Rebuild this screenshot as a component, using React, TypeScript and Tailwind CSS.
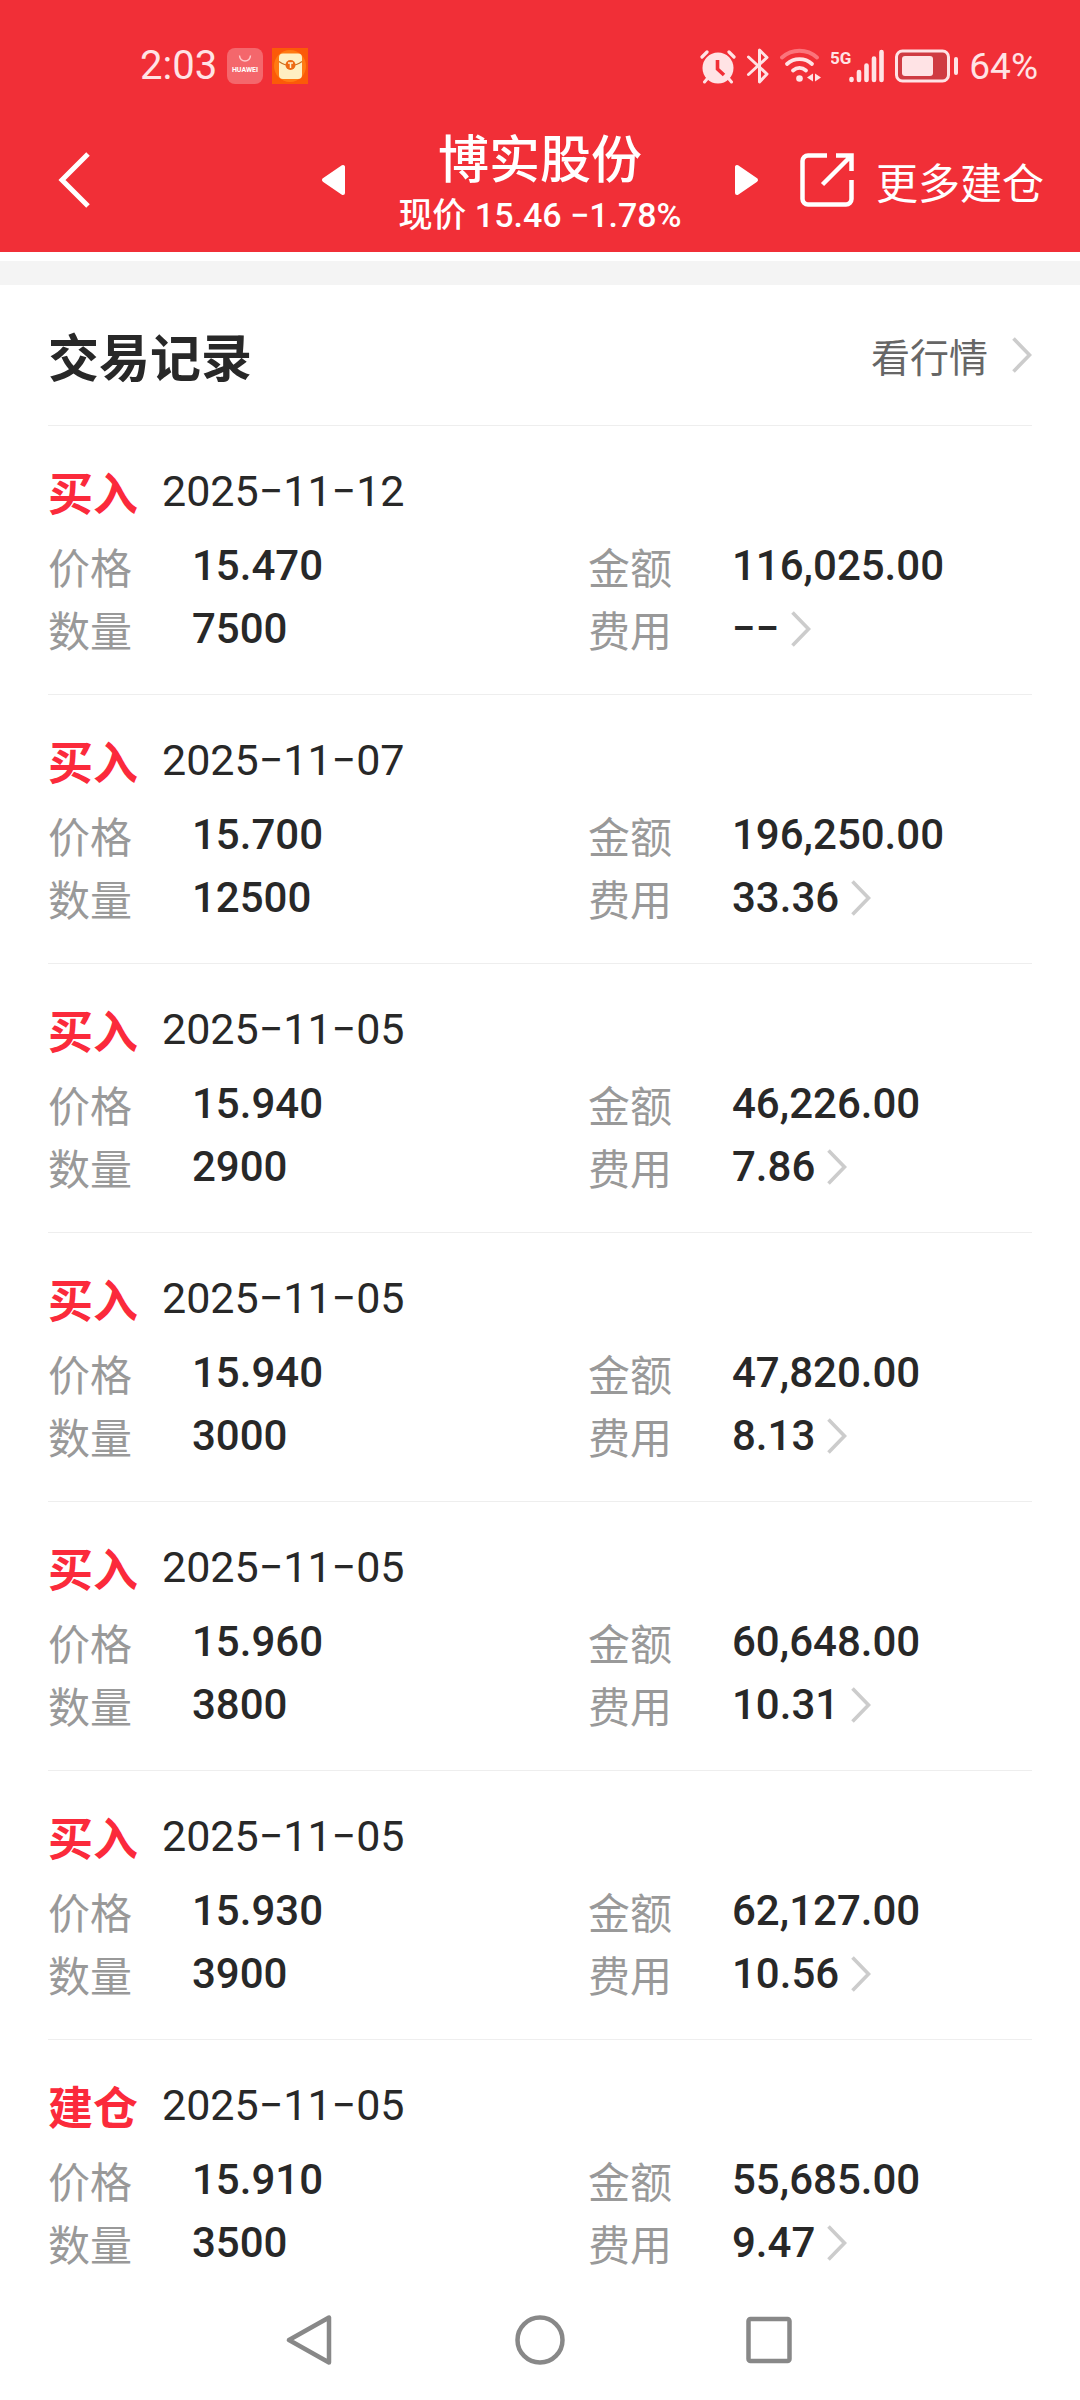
import React from 'react';

const RECORDS = [
  { type: '买入', date: '2025−11−12', price: '15.470', count: '7500', amount: '116,025.00', fee: '−−' },
  { type: '买入', date: '2025−11−07', price: '15.700', count: '12500', amount: '196,250.00', fee: '33.36' },
  { type: '买入', date: '2025−11−05', price: '15.940', count: '2900', amount: '46,226.00', fee: '7.86' },
  { type: '买入', date: '2025−11−05', price: '15.940', count: '3000', amount: '47,820.00', fee: '8.13' },
  { type: '买入', date: '2025−11−05', price: '15.960', count: '3800', amount: '60,648.00', fee: '10.31' },
  { type: '买入', date: '2025−11−05', price: '15.930', count: '3900', amount: '62,127.00', fee: '10.56' },
  { type: '建仓', date: '2025−11−05', price: '15.910', count: '3500', amount: '55,685.00', fee: '9.47' },
];

const Chevron: React.FC = () => (
  <svg className="h-9 w-5 shrink-0" viewBox="0 0 20 36" fill="none" stroke="#cccccc" strokeWidth="3.6" aria-hidden="true">
    <path d="M1.5 1.5 17.5 18 1.5 34.5" />
  </svg>
);

const StatusBar: React.FC = () => (
  <div className="flex h-[108px] items-center justify-between pt-6 pr-[42px] pl-[140px] font-[Roboto,sans-serif] text-[#ffe3e5]">
    <div className="flex items-center gap-[9px]">
      <span className="w-[78px] text-[40px] leading-none">2:03</span>
      <svg className="size-9" viewBox="0 0 36 36" aria-hidden="true">
        <rect width="36" height="36" rx="8" fill="#f4676c" />
        <path d="M12.5 7.5a5.5 5.5 0 0 0 11 0" fill="none" stroke="#ffc9cb" strokeWidth="1.4" />
        <text x="18" y="24" textAnchor="middle" fontSize="7" fontWeight="700" fill="#fff">HUAWEI</text>
      </svg>
      <svg className="size-9" viewBox="0 0 36 36" aria-hidden="true">
        <rect width="36" height="36" fill="#fb5a08" />
        <circle cx="18" cy="18" r="16" fill="#ff7a12" />
        <rect x="7" y="5.5" width="23" height="25.5" rx="4" fill="#ffefc2" />
        <path d="M7 13.5c4 3 7 4 11.5 4s7.5-1 11.5-4" fill="none" stroke="#c9701f" strokeWidth="1.3" />
        <circle cx="18.5" cy="17" r="5" fill="#ee6a12" />
        <path d="M16 15h5M18.5 15v5" stroke="#fff0cc" strokeWidth="1.5" />
      </svg>
    </div>
    <div className="flex items-center gap-2.5">
      <svg className="size-9" viewBox="0 0 36 36" fill="none" stroke="currentColor" strokeLinecap="round" aria-hidden="true">
        <circle cx="18" cy="20" r="15.5" fill="currentColor" stroke="none" />
        <path d="M2 9 7 4M34 9 29 4" strokeWidth="3.2" />
        <path d="M7 31 4.5 34M29 31 31.5 34" strokeWidth="3" />
        <path d="M17.5 12v9l6.5 6" stroke="#f12f37" strokeWidth="3.6" strokeLinecap="butt" />
      </svg>
      <svg className="h-9 w-6" viewBox="0 0 24 36" fill="none" stroke="currentColor" strokeWidth="3" strokeLinecap="round" strokeLinejoin="round" aria-hidden="true">
        <path d="M2.5 9 21 26 13.5 34V2L21 9.5 2.5 26.5" />
      </svg>
      <svg className="h-9 w-[41px]" viewBox="0 0 41 36" fill="none" stroke="currentColor" strokeWidth="3.8" strokeLinecap="round" aria-hidden="true">
        <path d="M2 9.5C12 .5 27 .5 37 9.5" stroke="#fb747b" />
        <path d="M7 16c7-6.5 18-6.5 25 0M13 22.5c4-3.5 9-3.5 13 0" />
        <circle cx="19.5" cy="30.5" r="3.3" fill="currentColor" stroke="none" />
        <path d="M33 25.5v8l-6-4zM35 25.5v8l6-4z" fill="currentColor" stroke="none" />
      </svg>
      <svg className="h-9 w-[53px]" viewBox="0 0 53 36" fill="none" stroke="currentColor" strokeWidth="4.6" strokeLinecap="round" aria-hidden="true">
        <text x="-1" y="16" fontSize="17" fontWeight="700" fill="currentColor" stroke="none">5G</text>
        <path d="M20.5 31v1M28 24v8M35.5 17.5V32M43 10.5V32M50.5 4V32" />
      </svg>
      <svg className="h-9 w-[65px]" viewBox="0 0 65 36" aria-hidden="true">
        <rect x="2.5" y="3" width="52" height="30" rx="6" fill="#cf3b42" stroke="currentColor" strokeWidth="3" />
        <rect x="8" y="8" width="31" height="20" rx="3" fill="currentColor" />
        <rect x="60" y="9" width="4" height="18" rx="2" fill="currentColor" />
      </svg>
      <span className="text-[37px] leading-none">64%</span>
    </div>
  </div>
);

const TitleBar: React.FC = () => (
  <div className="grid h-36 grid-cols-[1fr_438px_1fr] items-center text-white">
    <button type="button" aria-label="返回" className="justify-self-start pl-[58px]">
      <svg className="h-14 w-8" viewBox="0 0 32 56" fill="none" stroke="currentColor" strokeWidth="5" aria-hidden="true">
        <path d="M30 2 4 28 30 54" />
      </svg>
    </button>
    <div className="flex items-center justify-between">
      <button type="button" aria-label="上一只">
        <svg className="h-8 w-6" viewBox="0 0 24 32" fill="currentColor" stroke="currentColor" strokeWidth="4" strokeLinejoin="round" aria-hidden="true">
          <path d="M22 3v26L3 16z" />
        </svg>
      </button>
      <div className="pt-3.5 text-center font-medium">
        <h1 className="text-[51px] leading-[56px]">博实股份</h1>
        <p className="font-[Roboto,'Noto_Sans_CJK_SC',sans-serif] text-[34px] leading-[62px] whitespace-nowrap">
          现价 15.46 −1.78%
        </p>
      </div>
      <button type="button" aria-label="下一只">
        <svg className="h-8 w-6" viewBox="0 0 24 32" fill="currentColor" stroke="currentColor" strokeWidth="4" strokeLinejoin="round" aria-hidden="true">
          <path d="M2 3v26l19-13z" />
        </svg>
      </button>
    </div>
    <button type="button" className="flex items-center gap-[22px] justify-self-end pr-9 text-[42px] whitespace-nowrap">
      <svg className="size-[54px]" viewBox="0 0 54 54" fill="none" stroke="currentColor" strokeWidth="4.5" aria-hidden="true">
        <path d="M27 2.5H8A5.5 5.5 0 0 0 2.5 8v38A5.5 5.5 0 0 0 8 51.5h38a5.5 5.5 0 0 0 5.5-5.5V27" />
        <path d="M36 2.5h15.500V18M51 3 22.5 31.5" />
      </svg>
      更多建仓
    </button>
  </div>
);

const Field: React.FC<{ label: string; children: React.ReactNode }> = ({ label, children }) => (
  <div className="flex h-[63px] pl-12 leading-[63px]">
    <dt className="w-36 text-[42px] text-[#999999]">{label}</dt>
    <dd className="font-[Roboto,sans-serif] text-[42px] font-medium">{children}</dd>
  </div>
);

export default function App() {
  return (
    <div className="flex min-h-screen flex-col bg-white font-['Noto_Sans_CJK_SC',sans-serif] text-[#282828]">
      <header className="bg-[#f12f37]">
        <StatusBar />
        <TitleBar />
      </header>
      <div className="mt-[9px] h-6 bg-[#f4f4f4]" />

      <main>
        <div className="flex h-[140px] items-center justify-between px-12">
          <h2 className="text-[51px] font-bold">交易记录</h2>
          <a href="#quote" className="flex items-center gap-6 text-[39px] text-[#666666]">
            看行情
            <Chevron />
          </a>
        </div>
        <ul>
          {RECORDS.map((item, i) => (
            <li key={i} className="pb-[34px] last:pb-0">
              <div className="mx-12 border-t border-[#eeeeee]" />
              <div className="flex h-[108px] gap-6 px-12 pt-[34px] leading-[63px]">
                <span className="text-[45px] font-bold text-[#fb2a3b]">{item.type}</span>
                <span className="font-[Roboto,sans-serif] text-[43px]">{item.date}</span>
              </div>
              <dl className="grid grid-cols-2">
                <Field label="价格">{item.price}</Field>
                <Field label="金额">{item.amount}</Field>
                <Field label="数量">{item.count}</Field>
                <Field label="费用">
                  <button type="button" className="flex items-center gap-3">
                    {item.fee}
                    <Chevron />
                  </button>
                </Field>
              </dl>
            </li>
          ))}
        </ul>
      </main>

      <nav className="mt-auto flex h-[120px] items-center justify-center gap-[181px] text-[#888888]">
        <button type="button" aria-label="返回">
          <svg className="size-[50px]" viewBox="0 0 50 50" fill="none" stroke="currentColor" strokeWidth="4.5" strokeLinejoin="round" aria-hidden="true">
            <path d="M45 2.5v45L5 25z" />
          </svg>
        </button>
        <button type="button" aria-label="主页">
          <svg className="size-[50px]" viewBox="0 0 50 50" fill="none" stroke="currentColor" strokeWidth="4.5" aria-hidden="true">
            <circle cx="25" cy="25" r="22.5" />
          </svg>
        </button>
        <button type="button" aria-label="最近任务">
          <svg className="size-[50px]" viewBox="0 0 50 50" fill="none" stroke="currentColor" strokeWidth="4.5" aria-hidden="true">
            <rect x="2.5" y="4" width="41" height="42" rx="2" />
          </svg>
        </button>
      </nav>
    </div>
  );
}
